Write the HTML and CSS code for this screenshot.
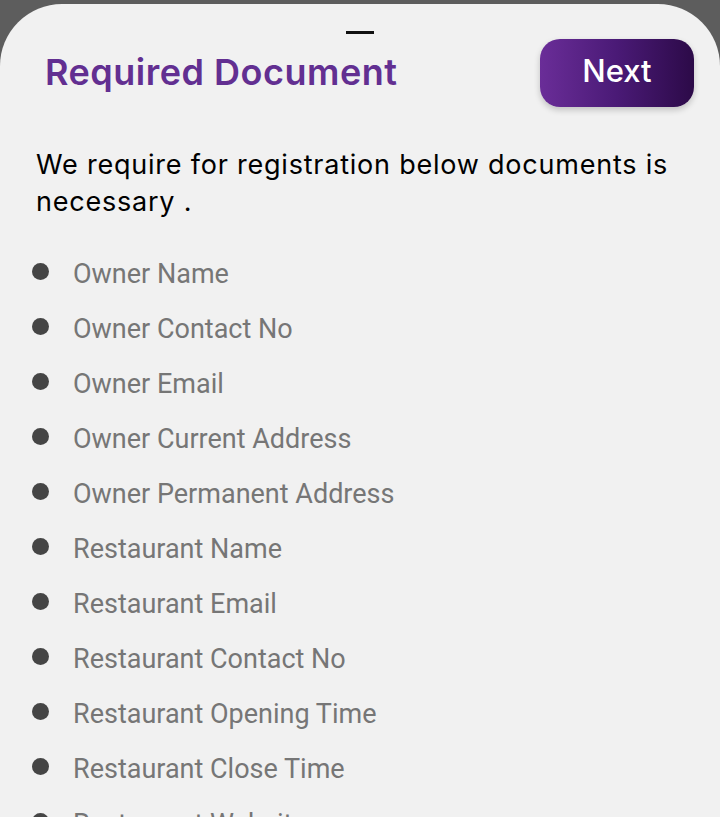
FILE: index.html
```html
<!DOCTYPE html>
<html>
<head>
<meta charset="utf-8">
<link rel="stylesheet" href="styles.css">
</head>
<body>
<div class="sheet">
  <div class="handle"></div>
  <div class="header">
    <h1 class="title">Required Document</h1>
    <button class="next">Next</button>
  </div>
  <p class="intro">We require for registration below documents is necessary .</p>
  <ul class="docs">
    <li><span class="dot"></span>Owner Name</li>
    <li><span class="dot"></span>Owner Contact No</li>
    <li><span class="dot"></span>Owner Email</li>
    <li><span class="dot"></span>Owner Current Address</li>
    <li><span class="dot"></span>Owner Permanent Address</li>
    <li><span class="dot"></span>Restaurant Name</li>
    <li><span class="dot"></span>Restaurant Email</li>
    <li><span class="dot"></span>Restaurant Contact No</li>
    <li><span class="dot"></span>Restaurant Opening Time</li>
    <li><span class="dot"></span>Restaurant Close Time</li>
    <li><span class="dot"></span>Restaurant Website</li>
  </ul>
</div>
</body>
</html>
```
FILE: styles.css
```css
html, body {
  margin: 0;
  padding: 0;
  background: #5d5d5d;
  height: 817px;
  overflow: hidden;
}
.sheet {
  margin-top: 4px;
  background: #f1f1f1;
  border-radius: 62px 62px 0 0;
  height: 900px;
  padding: 0 26px 0 35px;
  font-family: "Inter", "Liberation Sans", sans-serif;
}
.handle {
  width: 28px;
  height: 3px;
  background: #111;
  margin: 0 auto;
  position: relative;
  top: 27px;
  left: -5px;
}
.header {
  display: flex;
  justify-content: space-between;
  align-items: flex-start;
  padding-top: 32px;
}
.title {
  margin: 11px 0 0 10px;
  font-size: 36px;
  font-weight: 600;
  color: #622f91;
  letter-spacing: 0.5px;
}
.next {
  width: 154px;
  height: 68px;
  border: none;
  border-radius: 20px;
  background: linear-gradient(90deg, #6a2d98 0%, #4a1a76 50%, #2c0a48 100%);
  color: #fff;
  font-family: "Inter", "Liberation Sans", sans-serif;
  font-size: 31px;
  font-weight: 500;
  box-shadow: 0 3px 6px rgba(0,0,0,0.2);
  margin-top: 0;
  padding: 0 0 6px;
}
.intro {
  margin: 39px 0 0 1px;
  font-size: 27px;
  line-height: 37px;
  color: #000;
  font-weight: 400;
  letter-spacing: 0.78px;
}
.docs {
  list-style: none;
  margin: 26px 0 0 0;
  padding: 0;
}
.docs li {
  display: flex;
  align-items: center;
  height: 55px;
  font-family: "Roboto", "Liberation Sans", sans-serif;
  font-size: 27px;
  color: #767676;
}
.dot {
  width: 17px;
  height: 17px;
  border-radius: 50%;
  background: #454545;
  margin: -4px 24px 0 -3px;
  flex: none;
}
```
